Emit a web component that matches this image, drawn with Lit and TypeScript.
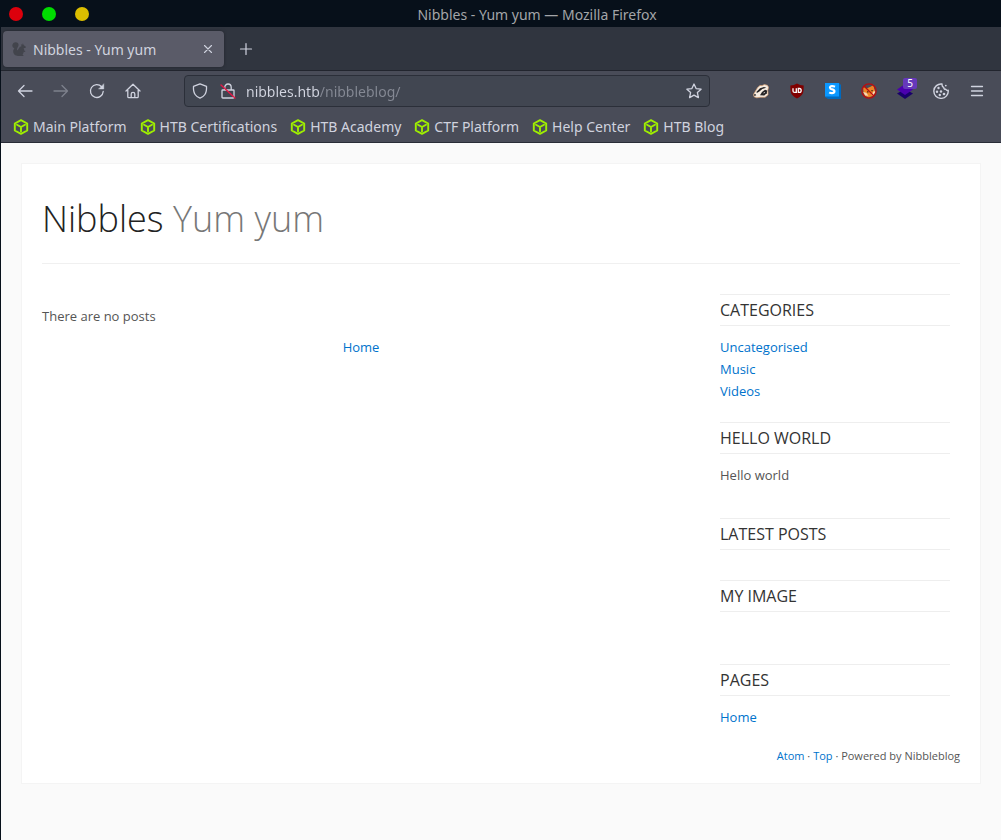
import { LitElement, html, css, svg } from "lit";
import { customElement } from "lit/decorators.js";

const stroked = (content: unknown, cls = "") => html`
  <svg class="icon ${cls}" viewBox="0 0 16 16" width="16" height="16" aria-hidden="true"
    fill="none" stroke="currentColor" stroke-width="1.3" stroke-linecap="round" stroke-linejoin="round">${content}</svg>`;

const icons = {
  back: stroked(svg`<path d="M15 8H1.5M7 2.5 1.5 8 7 13.5"/>`),
  forward: stroked(svg`<path d="M1 8h13.5M9 2.5 14.5 8 9 13.5"/>`),
  reload: stroked(svg`<path d="M14.2 8.5A6.4 6.4 0 1 1 12.6 3.8"/><path d="M14.8 1v5h-5z" fill="currentColor" stroke-width=".4"/>`),
  home: stroked(svg`<path d="M1 8 8 1.3 15 8M2.8 7v6.7q0 1 1 1h8.4q1 0 1-1V7M6.2 14.5V11q0-1.600 1.800-1.600T9.800 11v3.500"/>`),
  shield: stroked(svg`<path d="M8 .8 14.500 3.300q.3 5.500-1.600 8.200Q11 14.200 8 15.200q-3-1-4.900-3.700Q1.200 8.800 1.500 3.300z"/>`),
  lock: stroked(svg`<path d="M4.800 7V4.200a3.200 3.200 0 0 1 6.400 0V7M2.600 7h10.800q.6 0 .6.600v6.600q0 .800-.8.800H2.800q-.8 0-.8-.8V7.600q0-.6.6-.6z"/><path d="M1 2 15 15" stroke="#e51846" stroke-width="1.400"/>`),
  star: stroked(svg`<path d="m8 1 2.100 4.600 5 .6-3.700 3.400 1 5L8 12.100l-4.400 2.500 1-5L.9 6.200l5-.6z"/>`),
  menu: stroked(svg`<path d="M2.500 3.500h11M2.500 8h11M2.500 12.500h11"/>`),
  close: stroked(svg`<path d="m4.500 4.500 7 7m0-7-7 7" stroke-width="1.100"/>`),
  plus: stroked(svg`<path d="M8 2.500v11M2.500 8h11" stroke-width="1.200"/>`),
  cookie: stroked(svg`<path d="M9 1A7.200 7.200 0 1 0 15.200 7.300Q13.600 7.800 12.800 6.200 10.800 6.500 10.700 4.300 8.800 3.500 9 1z" stroke-width="1.400"/>
    <g fill="currentColor" stroke="none"><circle cx="5.500" cy="5" r="1.200"/><circle cx="4" cy="8.800" r="1.200"/><circle cx="8" cy="8.500" r="1.200"/><circle cx="6.800" cy="12" r="1.200"/><circle cx="11" cy="11" r="1.300"/><circle cx="12.800" cy="2.600" r=".9"/></g>`),
};

const cube = html`
  <svg class="cube" viewBox="0 0 16 16" width="16" height="16" aria-hidden="true" fill="none"
    stroke="#9fef00" stroke-width="1.900" stroke-linejoin="round">
    <path d="M8 1.200 14.200 4.500v7L8 14.800 1.800 11.500v-7z"/><path d="M4 5.700 8 8l4-2.300M8 8v4.500" stroke-linecap="round"/>
  </svg>`;

const favicon = html`
  <svg class="icon" viewBox="0 0 16 16" width="16" height="16" aria-hidden="true" fill="#42444c">
    <path d="M6.500 14.800Q2.800 14.500 2.200 11 1.800 8.800 3.400 7.500 1 6.800 1.300 4.300 1.900 1.200 4.600 1.200q3 .1 3 2.900Q7.500 5.500 6.600 6.400q-1.300 1.800 0 3.200L8 7q1-1.600 2.500-1.700L9.900 3l1.300 1 .6-1.800 1 2 1.900 1.200.1 1.300-2.300.5q.9 1 .7 2.200l1.200.6-.5.900-1.200-.1q-.1 1.700-1.100 2.600l1.200 1.500H6.500z"/>
  </svg>`;

const badger = html`
  <svg viewBox="0 0 16 16" width="16" height="16" aria-hidden="true">
    <path d="M.4 11.600 2.500 8 4.600 4.600 7 2.400l2 .2 2.400-1 3 .7 1.200 2-.8 3 .3 4.500-3 2.500H7.500l-3.800.5-2.600-1z" fill="#f6ece1" stroke="#d29a6c" stroke-width=".7"/>
    <path d="M3.500 8.800 7 5.200 11 4l2.300.8-4 1.200-3.200 2.700-2.300 1.400z" fill="#272526"/>
    <path d="M7 12.300 9 9l3-2.200 2.200.6-.4 2.800-2.500 2.300z" fill="#272526"/>
    <path d="M.8 11.500 2.400 11l.8 1.300-1.700.8z" fill="#272526"/><path d="m10 10.300 1.600-1.200.3 1z" fill="#fff"/>
  </svg>`;

const ublock = html`
  <svg viewBox="0 0 16 16" width="16" height="16" aria-hidden="true">
    <path d="M8 .4q3 2 6.700 2.200 0 5-.6 7.200Q13 13 8 15.600 3 13 1.900 9.800q-.6-2.200-.6-7.200Q5 2.400 8 .4z" fill="#800000"/>
    <path d="M4 5.300v2.600q0 1.500 1.700 1.500h1.600V5.300M9.300 5.500h1.100q1.800 0 1.800 1.900t-1.800 1.900H9.300z" fill="none" stroke="#fff" stroke-width="1.300"/>
  </svg>`;

const stylus = html`
  <svg viewBox="0 0 16 16" width="16" height="16" aria-hidden="true">
    <path d="M2 0h12l2 2v14H3l-3-2z" fill="#006abf"/><path d="M0 0h14v13.500H0z" fill="#0b98ff"/>
    <path d="M10 3.700Q8.500 3 7 3 4.900 3.100 5 4.700q.1 1.300 2.200 1.700 2.300.5 2.200 2Q9.300 10.100 7 10.100q-1.600 0-2.700-.8" fill="none" stroke="#fff" stroke-width="2.200"/>
  </svg>`;

const nofox = html`
  <svg viewBox="0 0 16 16" width="16" height="16" aria-hidden="true">
    <path d="M2.200 4 6 5.200l3.500-1.400 3.200-2 .3 3.500 1.500 3.700-2.300 3.800-4.500 1.700L4.200 13l-1.700-3z" fill="#ee8425"/>
    <path d="m2.200 9 3 .8 2.300 3-3.300-.4zM12.800 8l1.500.8-2 3.800-2-.6z" fill="#f6d7b7"/><path d="M6 8.300h1.500v1.300H6zM10.400 7h1.300v1.300h-1.300z" fill="#442718"/>
    <circle cx="8" cy="8" r="7.100" fill="none" stroke="#b90d10" stroke-width="1.300"/><path d="m3 3 10 10" stroke="#b90d10" stroke-width="1.300"/>
  </svg>`;

const layers = html`
  <svg viewBox="0 0 16 16" width="16" height="16" aria-hidden="true">
    <path d="M0 10.500 8 6l8 4.500L8 16z" fill="#19006b"/><path d="M0 6.500 8 1l8 5.500L8 12z" fill="#4b00ae"/>
  </svg>`;

const bookmarks = ["Main Platform", "HTB Certifications", "HTB Academy", "CTF Platform", "Help Center", "HTB Blog"];

@customElement("browser-chrome")
export class BrowserChrome extends LitElement {
  static styles = css`
    :host { display: block; font: 14px/20px "Noto Sans", sans-serif; color: #d0d3df; }
    button { display: grid; place-items: center; padding: 0; border: 0; background: none; color: inherit; font: inherit; }
    svg { display: block; flex: none; }
    .titlebar { display: flex; align-items: center; height: 27px; padding: 0 16px 0 8px; background: #07101a; color: #a3a5a8; }
    .lights { display: flex; gap: 19px; }
    .light { width: 14px; height: 14px; border-radius: 50%; }
    .red { background: #dc000c; }
    .green { background: #00dc00; }
    .yellow { background: #dcbe00; }
    .window-title { flex: 1; padding-top: 2px; text-align: center; }
    .tabs { display: flex; align-items: center; height: 43px; padding-left: 2px; background: #30353f; border-bottom: 1px solid #22252e; }
    .tab { display: flex; align-items: center; gap: 6px; width: 221px; height: 36px; padding: 0 8px; box-sizing: border-box; border-radius: 4px; background: #5a5b68; box-shadow: 0 0 3px #20232b; }
    .tab-title { flex: 1; padding-top: 2px; }
    .new-tab { width: 32px; height: 32px; margin-left: 6px; }
    .toolbar { display: flex; align-items: center; height: 40px; padding: 0 6px; background: #494c58; }
    .tool { position: relative; width: 36px; height: 32px; }
    .tool[disabled] { color: #7e818c; }
    .location { display: flex; flex: 1; align-items: center; gap: 12px; height: 30px; margin: 0 33px; padding: 0 7px; border: 1px solid #2b2f39; border-radius: 4px; background: #414651; }
    .address { flex: 1; min-width: 0; padding: 2px 0 0; border: 0; outline: 0; margin-left: -2px; font: inherit; color: transparent; background: linear-gradient(to right, #d3d6e1 74px, #858994 74px); background-clip: text; -webkit-background-clip: text; }
    .count { position: absolute; top: 3px; left: 16px; width: 14px; height: 11px; border-radius: 2px; background: #6638ba; color: #fff; font-size: 10px; line-height: 11px; }
    .bookmarks { display: flex; gap: 13px; height: 31px; padding: 0 12px; align-items: center; background: #494c58; border-bottom: 1px solid #292c37; }
    .bookmark { display: flex; align-items: center; gap: 4px; color: inherit; text-decoration: none; white-space: nowrap; }
  `;

  render() {
    return html`
      <header class="titlebar">
        <div class="lights"><span class="light red"></span><span class="light green"></span><span class="light yellow"></span></div>
        <div class="window-title">Nibbles - Yum yum — Mozilla Firefox</div>
      </header>
      <div class="tabs">
        <div class="tab">${favicon}<span class="tab-title">Nibbles - Yum yum</span><button aria-label="Close tab">${icons.close}</button></div>
        <button class="new-tab" aria-label="New tab">${icons.plus}</button>
      </div>
      <nav class="toolbar">
        <button class="tool" aria-label="Back">${icons.back}</button>
        <button class="tool" aria-label="Forward" disabled>${icons.forward}</button>
        <button class="tool" aria-label="Reload">${icons.reload}</button>
        <button class="tool" aria-label="Home page">${icons.home}</button>
        <div class="location">
          ${icons.shield}${icons.lock}
          <input class="address" aria-label="Address" .value=${"nibbles.htb/nibbleblog/"} />
          <button aria-label="Bookmark this page">${icons.star}</button>
        </div>
        <button class="tool" aria-label="Privacy Badger">${badger}</button>
        <button class="tool" aria-label="uBlock">${ublock}</button>
        <button class="tool" aria-label="Stylus">${stylus}</button>
        <button class="tool" aria-label="FoxyProxy">${nofox}</button>
        <button class="tool" aria-label="Wappalyzer">${layers}<span class="count">5</span></button>
        <button class="tool" aria-label="Cookies">${icons.cookie}</button>
        <button class="tool" aria-label="Menu">${icons.menu}</button>
      </nav>
      <nav class="bookmarks">
        ${bookmarks.map((name) => html`<a class="bookmark" href="#">${cube}${name}</a>`)}
      </nav>`;
  }
}

@customElement("blog-page")
export class BlogPage extends LitElement {
  static styles = css`
    :host { display: block; padding: 20px; font: 13px/22px "Open Sans", sans-serif; color: #555; background: #fafafa; }
    a { color: #0073cc; text-decoration: none; }
    p, h1, h2, ul { margin: 0; padding: 0; font-weight: 400; }
    .card { padding: 20px 20px 16px; border: 1px solid #f4f4f4; background: #fff; }
    .masthead { padding: 8px 0 17px; border-bottom: 1px solid #f0f0f0; }
    .site-name { font-size: 36px; line-height: 54px; font-weight: 300; color: #222; }
    .slogan { color: #777; }
    .columns { display: flex; gap: 40px; padding: 30px 10px 0 0; }
    .posts { flex: 1; padding-top: 11px; }
    .pager { margin-top: 9px; text-align: center; }
    .sidebar { display: flex; flex-direction: column; gap: 20px; width: 230px; }
    .widget-title { padding: 4px 0; border: solid #eee; border-width: 1px 0; font-size: 16px; line-height: 22px; color: #333; text-transform: uppercase; }
    .widget-body { padding-top: 10px; }
    .links { list-style: none; }
    .note { padding-bottom: 12px; }
    .picture { min-height: 22px; }
    .credits { margin-top: 17px; font-size: 11px; text-align: right; }
  `;

  widget(title: string, body: unknown) {
    return html`<section><h2 class="widget-title">${title}</h2><div class="widget-body">${body}</div></section>`;
  }

  links(names: string[]) {
    return html`<ul class="links">${names.map((name) => html`<li><a href="#">${name}</a></li>`)}</ul>`;
  }

  render() {
    return html`
      <div class="card">
        <header class="masthead"><h1 class="site-name">Nibbles <span class="slogan">Yum yum</span></h1></header>
        <div class="columns">
          <main class="posts"><p>There are no posts</p><p class="pager"><a href="#">Home</a></p></main>
          <aside class="sidebar">
            ${this.widget("Categories", this.links(["Uncategorised", "Music", "Videos"]))}
            ${this.widget("Hello world", html`<p class="note">Hello world</p>`)}
            ${this.widget("Latest posts", "")}
            ${this.widget("My image", html`<p class="picture"></p>`)}
            ${this.widget("Pages", this.links(["Home"]))}
          </aside>
        </div>
        <footer class="credits"><a href="#">Atom</a> · <a href="#">Top</a> · Powered by Nibbleblog</footer>
      </div>`;
  }
}

@customElement("app-root")
export class AppRoot extends LitElement {
  static styles = css`
    :host { display: block; box-sizing: border-box; min-height: 100vh; border-left: 1px solid #07101a; background: #fafafa; }
  `;

  render() {
    return html`<browser-chrome></browser-chrome><blog-page></blog-page>`;
  }
}
